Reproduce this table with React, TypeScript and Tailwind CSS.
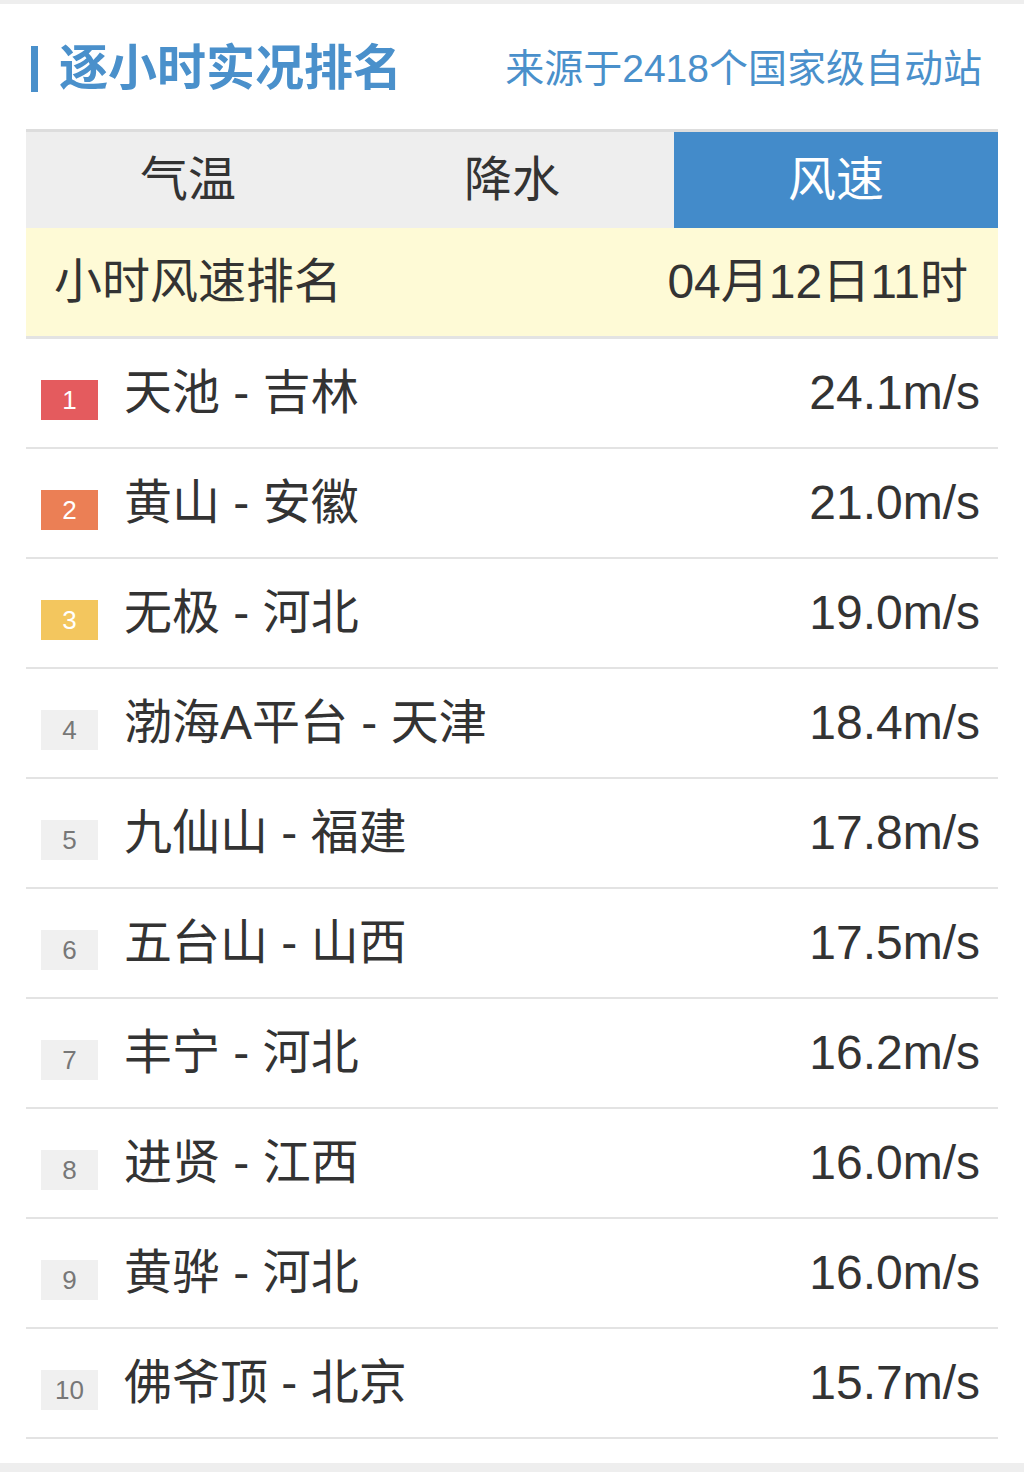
import React from "react";

const rows = [
  { n: 1, name: "天池 - 吉林", v: "24.1m/s" },
  { n: 2, name: "黄山 - 安徽", v: "21.0m/s" },
  { n: 3, name: "无极 - 河北", v: "19.0m/s" },
  { n: 4, name: "渤海A平台 - 天津", v: "18.4m/s" },
  { n: 5, name: "九仙山 - 福建", v: "17.8m/s" },
  { n: 6, name: "五台山 - 山西", v: "17.5m/s" },
  { n: 7, name: "丰宁 - 河北", v: "16.2m/s" },
  { n: 8, name: "进贤 - 江西", v: "16.0m/s" },
  { n: 9, name: "黄骅 - 河北", v: "16.0m/s" },
  { n: 10, name: "佛爷顶 - 北京", v: "15.7m/s" },
];

function badgeClass(n: number) {
  if (n === 1) return "bg-[#e45b5e] text-white";
  if (n === 2) return "bg-[#eb7f55] text-white";
  if (n === 3) return "bg-[#f3c65e] text-white";
  return "bg-[#f0f0f0] text-[#777]";
}

export default function App() {
  return (
    <div
      className="w-[1024px] h-[1472px] bg-white flex flex-col"
      style={{ fontFamily: '"Liberation Sans", "Noto Sans CJK SC", sans-serif' }}
    >
      <div className="h-[4px] bg-[#eeeeee]" />
      <div className="h-[125px] flex items-center justify-between pl-[31px] pr-[42px] pt-[4px]">
        <div className="flex items-center">
          <div className="w-[7px] h-[46px] bg-[#4a90cb]" />
          <div className="ml-[21px] text-[49px] font-bold text-[#4a90cb] leading-none">
            逐小时实况排名
          </div>
        </div>
        <div className="text-[39px] text-[#4a90cb] leading-none">来源于2418个国家级自动站</div>
      </div>
      <div className="mx-[26px] border-t-[3px] border-[#dddddd] flex h-[99px]">
        <div className="flex-1 bg-[#eeeeee] flex items-center justify-center text-[48px] text-[#333]">气温</div>
        <div className="flex-1 bg-[#eeeeee] flex items-center justify-center text-[48px] text-[#333]">降水</div>
        <div className="flex-1 bg-[#438bca] flex items-center justify-center text-[48px] text-white">风速</div>
      </div>
      <div className="mx-[26px] h-[111px] bg-[#fefad6] border-b-[3px] border-[#e3e3e3] flex items-center justify-between pl-[28px] pr-[30px] text-[48px] text-[#333]">
        <span>小时风速排名</span>
        <span>04月12日11时</span>
      </div>
      <div className="mx-[26px] flex flex-col">
        {rows.map((r) => (
          <div
            key={r.n}
            className="h-[110px] border-b-[2px] border-[#e3e3e3] flex items-center pl-[15px] pr-[18px]"
          >
            <div
              className={`w-[57px] h-[40px] mt-[14px] flex items-center justify-center text-[26px] leading-none ${badgeClass(r.n)}`}
            >
              {r.n}
            </div>
            <div className="ml-[26px] text-[48px] text-[#333] leading-none flex-1">{r.name}</div>
            <div className="text-[48px] text-[#333] leading-none">{r.v}</div>
          </div>
        ))}
      </div>
      <div className="flex-1" />
      <div className="h-[9px] bg-[#eeeeee]" />
    </div>
  );
}
